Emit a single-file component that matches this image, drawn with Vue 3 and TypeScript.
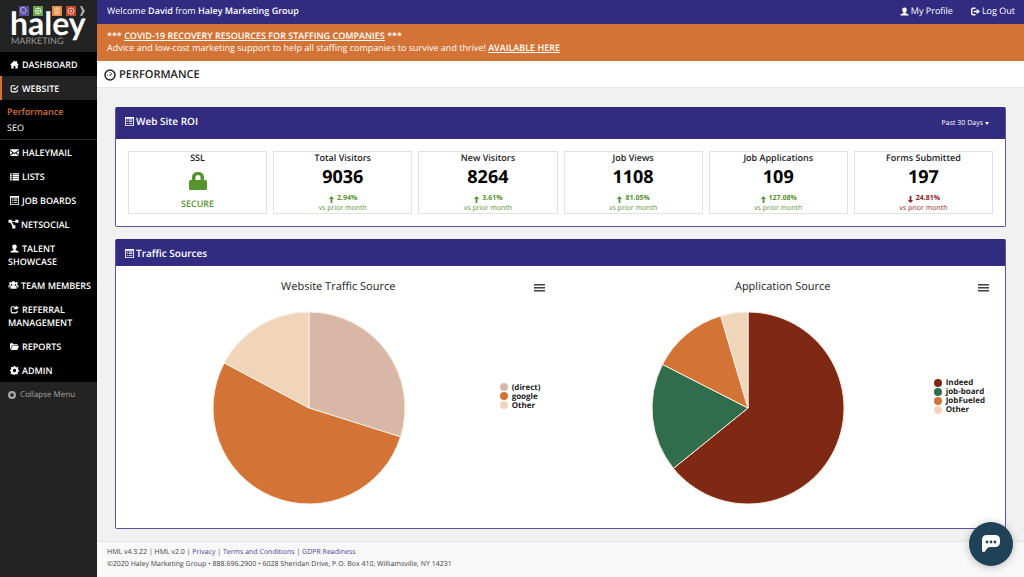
<script setup lang="ts">
interface MenuItem {
  label: string
  icon: string
  active?: boolean
  children?: { label: string; current?: boolean }[]
}
interface Stat {
  label: string
  value: string
  change: string
  down?: boolean
}
interface Slice {
  label: string
  color: string
  from: number
  to: number
}
interface Chart {
  title: string
  slices: Slice[]
}

const icons: Record<string, string> = {
  home: 'M8 1 0 8.500h2.200V15h4.300v-4.500h3V15h4.300V8.500H16L12.500 5.200V2h-2v1.400z',
  edit: 'M10 2H4Q1 2 1 5v7q0 3 3 3h7q3 0 3-3V9l-2 2v1q0 1-1 1H4q-1 0-1-1V5q0-1 1-1h4zM5.500 8 7 6.500l1.700 1.700L14 2.500 15.500 4 8.500 11.300z',
  mail: 'M0 2h16v1L8 9 0 3zM0 5l4.500 3.500L0 12zm16 0-4.500 3.500L16 12zM6 9.500l2 1.500 2-1.500 6 4.500H0z',
  list: 'M0 2h3v2.500H0zm4.500 0H16v2.500H4.500zM0 5.500h3V8H0zm4.500 0H16V8H4.500zM0 9h3v2.500H0zm4.500 0H16v2.500H4.500zM0 12.500h3V15H0zm4.500 0H16V15H4.500z',
  board: 'M0 0h16v16H0zM1.500 3v11.500h13V3zM3 4.500h2V6H3zm3.500 0H13V6H6.500zM3 7.500h2V9H3zm3.500 0H13V9H6.500zM3 10.500h2V12H3zm3.500 0H13V12H6.500z',
  network: 'M0 1h5v2h6V1h5v5h-5V4.500H5l3.500 5.500H11v5H6v-4L3.200 6H0z',
  user: 'M8 1c2.500 0 4 1.500 4 4 0 2-.8 3.500-2 4.500v1.500l5 2V15H1v-2l5-2V9.500C4.800 8.500 4 7 4 5c0-2.500 1.500-4 4-4z',
  group: 'M8 2a3 3 0 0 1 1.800 5.500v1.300L13 10.500V14H3v-3.500l3.200-1.700V7.500A3 3 0 0 1 8 2zM3 3a2 2 0 0 1 1.200 3.600q.2 1.200.8 1.600L1.800 10v2H0V8.800l2-1V6.600A2 2 0 0 1 3 3zm10 0a2 2 0 0 0-1.200 3.600q-.2 1.200-.8 1.600l3.200 1.800v2H16V8.800l-2-1V6.600A2 2 0 0 0 13 3z',
  share: 'M8 2H5Q1 2 1 6v5q0 4 4 4h5q4 0 4-4v-1h-2v1q0 2-2 2H5q-2 0-2-2V6q0-2 2-2h3zM10 1l6 4-6 4V6.500Q7.500 6.500 7 9 5.500 4 10 3.500z',
  folder: 'M0 3q0-1 1-1h4l1.500 2H13q1 0 1 1v1H4L1.500 11 0 13zM4.500 7H16l-3 7H1.500z',
  gear: 'M6.500 0h3l.5 2 1.500.7L13.300 1.500l1.700 2L13.800 5.500l.5 1.300 1.700.5v2.500l-2 .5-.7 1.500 1.200 1.800-2 1.700-1.800-1.100-1.400.5-.5 1.800h-2.300l-.5-1.800-1.500-.7-2 1.200-1.700-2L2.200 11l-.6-1.300L0 9.200V6.800l1.800-.5.6-1.500L1.300 3l1.700-1.700 2 1.100L6 2zM8 5a3 3 0 1 0 0 6 3 3 0 0 0 0-6z',
  logout: 'M8 1H4Q0 1 0 5v6q0 4 4 4h4v-2.500H4.500q-2 0-2-2v-5q0-2 2-2H8zM10 3l6 5-6 5v-3.500H5v-3h5z',
  circle: 'M8 0a8 8 0 1 0 0 16A8 8 0 0 0 8 0zM8 4.500a3.500 3.500 0 1 1 0 7 3.500 3.500 0 0 1 0-7z',
  up: 'M8 0l6 7h-4v9H6V7H2z',
  down: 'M8 16 2 9h4V0h4v9h4z',
}

const menu: MenuItem[] = [
  { label: 'DASHBOARD', icon: 'home' },
  {
    label: 'WEBSITE',
    icon: 'edit',
    active: true,
    children: [{ label: 'Performance', current: true }, { label: 'SEO' }],
  },
  { label: 'HALEYMAIL', icon: 'mail' },
  { label: 'LISTS', icon: 'list' },
  { label: 'JOB BOARDS', icon: 'board' },
  { label: 'NETSOCIAL', icon: 'network' },
  { label: 'TALENT SHOWCASE', icon: 'user' },
  { label: 'TEAM MEMBERS', icon: 'group' },
  { label: 'REFERRAL MANAGEMENT', icon: 'share' },
  { label: 'REPORTS', icon: 'folder' },
  { label: 'ADMIN', icon: 'gear' },
]
const wideIcons = ['network', 'group']

const stats: Stat[] = [
  { label: 'Total Visitors', value: '9036', change: '2.94%' },
  { label: 'New Visitors', value: '8264', change: '3.61%' },
  { label: 'Job Views', value: '1108', change: '81.05%' },
  { label: 'Job Applications', value: '109', change: '127.08%' },
  { label: 'Forms Submitted', value: '197', change: '24.81%', down: true },
]

const charts: Chart[] = [
  {
    title: 'Website Traffic Source',
    slices: [
      { label: '(direct)', color: '#d9b7a6', from: 0, to: 107.5 },
      { label: 'google', color: '#d37436', from: 107.5, to: 298 },
      { label: 'Other', color: '#f0d5bb', from: 298, to: 360 },
    ],
  },
  {
    title: 'Application Source',
    slices: [
      { label: 'Indeed', color: '#7f2813', from: 0, to: 231 },
      { label: 'job-board', color: '#2f6d4d', from: 231, to: 297 },
      { label: 'JobFueled', color: '#d37436', from: 297, to: 343.5 },
      { label: 'Other', color: '#f0d5bb', from: 343.5, to: 360 },
    ],
  },
]

function point(deg: number): string {
  const a = (deg * Math.PI) / 180
  return `${(96 + 96 * Math.sin(a)).toFixed(2)} ${(96 - 96 * Math.cos(a)).toFixed(2)}`
}
function slicePath(s: Slice): string {
  const large = s.to - s.from > 180 ? 1 : 0
  return `M96 96L${point(s.from)}A96 96 0 ${large} 1 ${point(s.to)}Z`
}
</script>

<template>
  <div class="app">
    <aside class="sidebar">
      <a href="#" class="logo" aria-label="Haley Marketing">
        <svg width="97" height="52" viewBox="0 0 97 52">
          <rect x="19" y="6" width="10" height="10" fill="#5a50a5" />
          <path d="M21 8q4-2 5 2t-4 3q-2-2-1-5z" fill="none" stroke="#b9b3e6" />
          <rect x="33" y="6" width="10" height="10" fill="#69a04b" />
          <circle cx="38" cy="11" r="3" fill="none" stroke="#d5e8c5" />
          <path d="M35 11h6M38 8v6" stroke="#d5e8c5" />
          <rect x="52" y="6" width="10" height="10" fill="#e08a45" />
          <path d="M55 8h4v6h-4zM57 8v6" fill="none" stroke="#f6d3b3" />
          <rect x="66" y="6" width="10" height="10" fill="#c4492f" />
          <circle cx="71" cy="11" r="3" fill="none" stroke="#f3c5b9" />
          <circle cx="71" cy="11" r="1" fill="#f3c5b9" />
          <path d="M80 6h2l3 5-3 5h-2l2-5z" fill="#a9a9a9" />
          <text x="10" y="35" class="logo-name">haley</text>
          <text x="11" y="44" class="logo-sub">MARKETING</text>
        </svg>
      </a>
      <nav>
        <ul class="menu">
          <li v-for="item in menu" :key="item.label">
            <a href="#" class="menu-link" :class="{ active: item.active }">
              <svg class="menu-icon" :class="{ wide: wideIcons.includes(item.icon) }" viewBox="0 0 16 16"><path :d="icons[item.icon]" fill-rule="evenodd" /></svg>{{ item.label }}
            </a>
            <ul v-if="item.children" class="submenu">
              <li v-for="c in item.children" :key="c.label">
                <a href="#" :class="{ current: c.current }">{{ c.label }}</a>
              </li>
            </ul>
          </li>
        </ul>
      </nav>
      <button type="button" class="collapse">
        <svg class="collapse-icon" viewBox="0 0 16 16"><path :d="icons.circle" fill-rule="evenodd" /></svg>Collapse Menu
      </button>
    </aside>

    <div class="main">
      <header class="topbar">
        <span>Welcome <b>David</b> from <b>Haley Marketing Group</b></span>
        <nav class="account">
          <a href="#"><svg class="icon" viewBox="0 0 16 16"><path :d="icons.user" /></svg>My Profile</a>
          <a href="#"><svg class="icon" viewBox="0 0 16 16"><path :d="icons.logout" /></svg>Log Out</a>
        </nav>
      </header>
      <div class="banner">
        <p><b>*** <a href="#">COVID-19 RECOVERY RESOURCES FOR STAFFING COMPANIES</a> ***</b></p>
        <p>Advice and low-cost marketing support to help all staffing companies to survive and thrive! <a href="#"><b>AVAILABLE HERE</b></a></p>
      </div>
      <div class="page-title">
        <svg width="12" height="12" viewBox="0 0 12 12" fill="none" stroke="#222">
          <circle cx="6" cy="6" r="5" stroke-width="1.500" />
          <path d="M5.500 7 8 4M3 6h1M6 3v.8" />
        </svg>
        <h1>PERFORMANCE</h1>
      </div>

      <main class="content">
        <section class="panel">
          <div class="panel-head tall">
            <svg class="icon head-icon" viewBox="0 0 16 16"><path :d="icons.board" fill-rule="evenodd" /></svg>
            <h2>Web Site ROI</h2>
            <button type="button" class="range">Past 30 Days<span class="caret"></span></button>
          </div>
          <div class="stats">
            <article class="stat">
              <h3>SSL</h3>
              <svg class="lock" viewBox="0 0 18 18">
                <path d="M3 8V5.500Q3 0 9 0t6 5.500V8h1.500Q18 8 18 9.500v7q0 1.500-1.500 1.500h-15Q0 18 0 16.500v-7Q0 8 1.500 8zm3.500 0h5V5.500Q11.500 3 9 3T6.500 5.500z" fill-rule="evenodd" />
              </svg>
              <p class="secure">SECURE</p>
            </article>
            <article v-for="s in stats" :key="s.label" class="stat">
              <h3>{{ s.label }}</h3>
              <p class="value">{{ s.value }}</p>
              <p class="change" :class="{ down: s.down }">
                <svg class="arrow" viewBox="0 0 16 16"><path :d="s.down ? icons.down : icons.up" /></svg>{{ s.change }}
              </p>
              <p class="prior" :class="{ down: s.down }">vs prior month</p>
            </article>
          </div>
        </section>

        <section class="panel grow">
          <div class="panel-head">
            <svg class="icon head-icon" viewBox="0 0 16 16"><path :d="icons.board" fill-rule="evenodd" /></svg>
            <h2>Traffic Sources</h2>
          </div>
          <div class="charts">
            <article v-for="c in charts" :key="c.title" class="chart">
              <h3>{{ c.title }}</h3>
              <button type="button" class="chart-menu" aria-label="Chart menu"><i></i><i></i><i></i></button>
              <div class="chart-body">
                <div class="pie-area">
                  <svg class="pie" viewBox="0 0 192 192">
                    <path v-for="s in c.slices" :key="s.label" :d="slicePath(s)" :fill="s.color" stroke="#fbeee2" stroke-linejoin="round" />
                  </svg>
                </div>
                <ul class="legend">
                  <li v-for="s in c.slices" :key="s.label">
                    <span class="dot" :style="{ background: s.color }"></span>{{ s.label }}
                  </li>
                </ul>
              </div>
            </article>
          </div>
        </section>
      </main>

      <footer class="footer">
        <p>HML v4.3.22 | HML v2.0 | <a href="#">Privacy</a> | <a href="#">Terms and Conditions</a> | <a href="#">GDPR Readiness</a></p>
        <p>©2020 Haley Marketing Group • 888.696.2900 • 6028 Sheridan Drive, P.O. Box 410, Williamsville, NY 14231</p>
      </footer>
    </div>

    <button type="button" class="chat" aria-label="Open chat">
      <svg width="20" height="20" viewBox="0 0 20 20">
        <path d="M6 1h8q5 0 5 5v2q0 5-5 5H9q-2 0-3 1.500l-2 3Q1 19 1 16V6q0-5 5-5z" fill="#fff" />
        <circle cx="6" cy="8" r="1.400" fill="#1f4257" />
        <circle cx="10" cy="8" r="1.400" fill="#1f4257" />
        <circle cx="14" cy="8" r="1.400" fill="#1f4257" />
      </svg>
    </button>
  </div>
</template>

<style>
body {
  margin: 0;
}
</style>

<style scoped>
.app {
  display: flex;
  min-height: 100vh;
  background: #f1f1f1;
  font-family: "Open Sans", "Noto Sans", sans-serif;
  font-size: 9px;
  line-height: 12px;
  color: #222;
  text-rendering: geometricPrecision;
}
h1, h2, h3, p, ul {
  margin: 0;
  padding: 0;
}
ul {
  list-style: none;
}
a {
  color: inherit;
  text-decoration: none;
}
b {
  font-weight: 600;
}
button {
  font: inherit;
  color: inherit;
  background: none;
  border: 0;
  padding: 0;
  cursor: pointer;
  text-rendering: inherit;
}
svg {
  flex: none;
}

.sidebar {
  flex: none;
  width: 97px;
  background: #232323;
  color: #fff;
}
.logo {
  display: block;
  height: 52px;
}
.logo-name {
  font-family: Lato, sans-serif;
  font-size: 32px;
  font-weight: 700;
  fill: #fff;
}
.logo-sub {
  font-family: Lato, sans-serif;
  font-size: 9px;
  fill: #9a9a9a;
}
.menu {
  background: #000;
}
.menu-link {
  display: block;
  padding: 6px 2px 5px 8px;
  font-weight: 600;
  line-height: 13px;
}
.menu-link.active {
  background: #232323;
  border-left: 2px solid #d37436;
  padding-left: 6px;
}
.menu-icon {
  width: 9px;
  height: 9px;
  margin: 0 3px 0 2px;
  vertical-align: -1px;
  fill: #fff;
}
.menu-icon.wide {
  width: 11px;
  height: 10px;
  margin: 0 2px 0 0;
}
.submenu {
  padding: 4px 0 3px 7px;
  border-bottom: 1px solid #2a2a2a;
  line-height: 16px;
}
.submenu .current {
  color: #d37436;
  font-weight: 600;
}
.collapse {
  display: flex;
  align-items: center;
  padding: 7px 8px;
  font-size: 8px;
  color: #a5a5a5;
}
.collapse-icon {
  width: 8px;
  height: 8px;
  margin-right: 4px;
  fill: #a5a5a5;
}

.main {
  flex: 1;
  min-width: 0;
  display: flex;
  flex-direction: column;
}
.topbar {
  display: flex;
  justify-content: space-between;
  align-items: center;
  height: 24px;
  padding: 0 9px 2px 10px;
  box-sizing: border-box;
  background: #332b80;
  color: #fff;
}
.account {
  display: flex;
  gap: 18px;
}
.account a {
  display: flex;
  align-items: center;
  gap: 2px;
}
.icon {
  width: 9px;
  height: 9px;
  fill: #fff;
}
.banner {
  padding: 6px 10px 7px;
  background: #d37436;
  color: #fff;
}
.banner a {
  text-decoration: underline;
}
.page-title {
  display: flex;
  align-items: center;
  gap: 3px;
  height: 27px;
  padding: 2px 0 0 7px;
  background: #fff;
  border-bottom: 1px solid #e6e6e6;
  box-sizing: border-box;
}
.page-title h1 {
  font-size: 11px;
  font-weight: 600;
  line-height: 16px;
}
.content {
  flex: 1;
  display: flex;
  flex-direction: column;
  gap: 12px;
  padding: 19px 18px 12px;
}
.panel {
  background: #fff;
  border: 1px solid #5c559a;
  border-top-color: #332b80;
  border-radius: 2px;
}
.grow {
  flex: 1;
}
.panel-head {
  display: flex;
  align-items: center;
  gap: 2px;
  height: 26px;
  padding: 0 16px 0 9px;
  background: #332b80;
  color: #fff;
}
.panel-head.tall {
  height: 31px;
}
.panel-head h2 {
  font-size: 10px;
  font-weight: 600;
}
.tall h2,
.tall .head-icon {
  margin-bottom: 5px;
}
.range {
  display: flex;
  align-items: center;
  gap: 2px;
  margin-left: auto;
  font-size: 7px;
}
.caret {
  border: 2px solid transparent;
  border-top: 3px solid #fff;
  border-bottom: 0;
}
.stats {
  display: grid;
  grid-template-columns: repeat(6, 1fr);
  gap: 6px;
  padding: 12px;
}
.stat {
  height: 61px;
  border: 1px solid #e2e2e2;
  text-align: center;
}
.stat h3 {
  font-size: 9px;
  font-weight: 600;
}
.value {
  font-size: 18px;
  font-weight: 700;
  line-height: 26px;
  color: #000;
}
.change,
.prior {
  font-size: 7px;
  line-height: 10px;
  color: #55942f;
}
.change {
  display: flex;
  justify-content: center;
  align-items: center;
  gap: 2px;
  margin-top: 4px;
  font-weight: 700;
  fill: #55942f;
}
.change.down,
.prior.down {
  color: #981b1e;
  fill: #981b1e;
}
.arrow {
  width: 7px;
  height: 7px;
}
.lock {
  display: block;
  width: 18px;
  height: 18px;
  margin: 8px auto;
  fill: #55942f;
}
.secure {
  font-weight: 600;
  color: #55942f;
}

.charts {
  display: grid;
  grid-template-columns: 1fr 1fr;
}
.chart {
  position: relative;
  padding: 13px 20px 24px 2px;
}
.chart h3 {
  padding-left: 18px;
  font-size: 11px;
  font-weight: 400;
  line-height: 16px;
  text-align: center;
}
.chart-menu {
  position: absolute;
  top: 18px;
  right: 16px;
  display: grid;
  gap: 1px;
  width: 11px;
}
.chart-menu i {
  height: 1px;
  background: #444;
  border-bottom: 1px solid #999;
}
.chart-body {
  display: flex;
  align-items: center;
  padding-top: 17px;
}
.pie-area {
  flex: 1;
  display: flex;
  justify-content: center;
}
.pie {
  width: 192px;
  height: 192px;
  overflow: visible;
}
.legend {
  padding-bottom: 24px;
  font-size: 8px;
  font-weight: 700;
  line-height: 9px;
}
.legend li {
  display: flex;
  align-items: center;
  gap: 4px;
}
.dot {
  width: 8px;
  height: 8px;
  border-radius: 50%;
}

.footer {
  padding: 5px 10px 7px;
  background: #f8f8f8;
  border-top: 1px solid #e8e8e8;
  font-size: 7px;
  color: #444;
}
.footer a {
  color: #4a4391;
}
.chat {
  position: fixed;
  right: 11px;
  bottom: 11px;
  display: flex;
  align-items: center;
  justify-content: center;
  width: 44px;
  height: 44px;
  border-radius: 50%;
  background: #1f4257;
  box-shadow: 0 1px 8px rgba(0, 0, 0, 0.25);
}
</style>
